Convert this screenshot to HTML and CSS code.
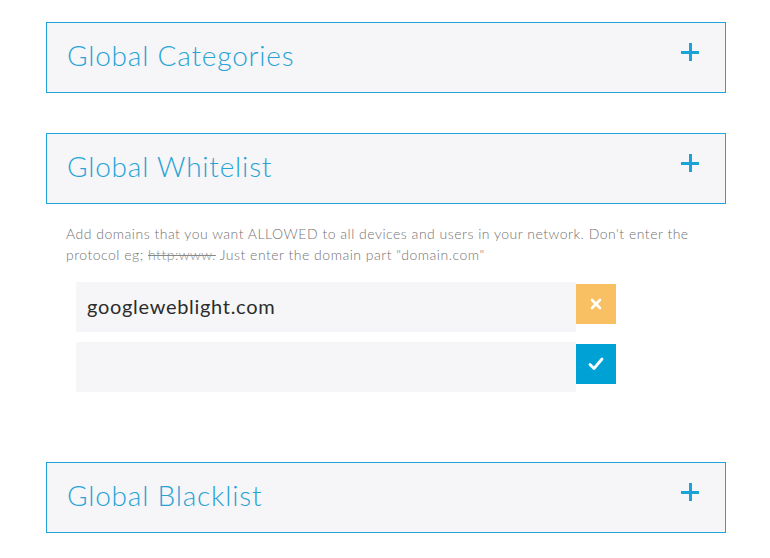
FILE: index.html
```html
<!DOCTYPE html>
<html>
<head>
<meta charset="utf-8">
<link rel="stylesheet" href="styles.css">
</head>
<body>
<div class="page">
  <section class="panel">
    <h2 class="panel-title">Global Categories</h2>
    <span class="plus"></span>
  </section>
  <section class="panel">
    <h2 class="panel-title">Global Whitelist</h2>
    <span class="plus"></span>
  </section>
  <div class="body">
    <p class="desc">Add domains that you want ALLOWED to all devices and users in your network. Don't enter the protocol eg; <s>http:www.</s> Just enter the domain part "domain.com"</p>
    <div class="row">
      <div class="field">googleweblight.com</div>
      <button class="btn btn-remove">
        <svg width="12" height="12" viewBox="0 0 12 12"><path d="M2 2L10 10M10 2L2 10" stroke="#fff" stroke-width="2.6" stroke-linecap="round"/></svg>
      </button>
    </div>
    <div class="row">
      <div class="field"></div>
      <button class="btn btn-ok">
        <svg width="16" height="14" viewBox="0 0 16 14"><path d="M2 7.5L6 11.5L14 2" fill="none" stroke="#fff" stroke-width="2.8" stroke-linecap="round" stroke-linejoin="round"/></svg>
      </button>
    </div>
  </div>
  <section class="panel">
    <h2 class="panel-title">Global Blacklist</h2>
    <span class="plus"></span>
  </section>
</div>
</body>
</html>
```
FILE: styles.css
```css
html, body { margin: 0; padding: 0; background: #fff; }
body { font-family: "Lato", "Open Sans", sans-serif; }
.page { padding: 22px 44px 0 46px; display: flex; flex-direction: column; }
.panel {
  position: relative;
  box-sizing: border-box;
  width: 680px;
  height: 71px;
  flex: none;
  border: 1px solid #1ea5d9;
  background: #f6f6f8;
  display: flex;
  align-items: center;
  justify-content: space-between;
  padding: 0 26px 0 20px;
  margin-bottom: 40px;
}
.panel-title {
  margin: 0;
  font-weight: 300;
  font-size: 28px;
  letter-spacing: 0.8px;
  color: #27a3d6;
  position: relative; top: -3px;
}
.plus { position: relative; width: 18px; height: 18px; top: -6px; }
.plus::before, .plus::after { content: ""; position: absolute; background: #1ba3d8; }
.plus::before { left: 0; top: 8px; width: 18px; height: 3px; }
.plus::after { left: 8px; top: 0; width: 3px; height: 18px; }
.body { margin-top: -21px; padding: 0 0 0 20px; height: 239px; flex: none; }
.desc {
  margin: 0 0 17px 0;
  font-size: 14px;
  line-height: 21px;
  color: #737373;
  font-weight: 300;
  letter-spacing: 0.5px;
  width: 630px;
}
.desc s { color: #888; }
.row { display: flex; align-items: flex-start; margin-left: 10px; margin-bottom: 10px; }
.field {
  width: 500px; height: 50px; background: #f6f6f8;
  box-sizing: border-box; padding-left: 11px;
  font-size: 20px; line-height: 48px; color: #2c2c2c; font-weight: 400;
  letter-spacing: 0.7px;
}
.btn {
  margin-top: 2px; width: 40px; height: 40px; border: 0; padding: 0;
  display: flex; align-items: center; justify-content: center;
}
.btn-remove { background: #f8c062; }
.btn-ok { background: #00a2d6; }
```
